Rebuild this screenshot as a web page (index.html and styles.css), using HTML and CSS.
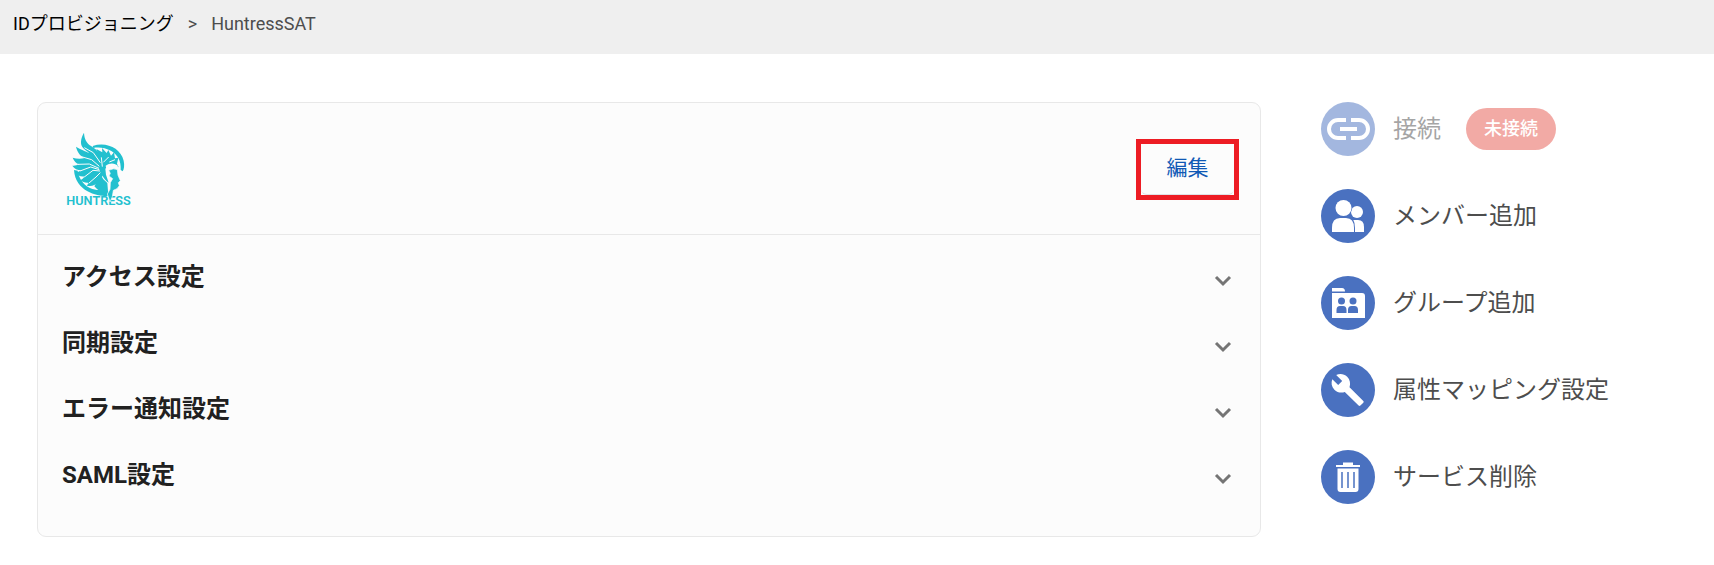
FILE: index.html
```html
<!DOCTYPE html>
<html lang="ja">
  <head>
    <meta charset="UTF-8" />
    <title>HuntressSAT</title>
    <meta name="viewport" content="width=device-width, initial-scale=1.0" />
    <link rel="stylesheet" href="styles.css">
  </head>
  <body>
    <nav class="breadcrumb">
      <a href="#">IDプロビジョニング</a>
      <span>&gt;</span>
      <span>HuntressSAT</span>
    </nav>

    <main class="content">
      <section class="card">
        <div class="card-header">
          <svg class="logo" viewBox="48 36 201 225" role="img" aria-label="HUNTRESS">
            <text class="logo-text" x="49" y="256">HUNTRESS</text>
            <g fill="#22c0cf">
              <!-- ring behind the helmet -->
              <path d="M128 78C168 64 212 84 221 122C224 136 222 147 218 154L212 150C214 122 202 104 184 93C166 83 146 81 130 84Z" />
              <path d="M72 150L83 152C87 178 103 198 127 207C146 213 164 207 170 220L174 228C150 230 76 218 72 150Z" />
              <!-- wing -->
              <path d="M102 38C91 57 91 72 97 81C104 90 112 94 118 99C106 94 96 90 78 80C82 96 89 107 104 114C94 117 80 117 68 113C72 123 78 130 88 133C80 136 74 138 67 137C73 146 82 151 94 151C86 155 81 158 75 159C82 167 93 171 105 169C100 174 96 179 91 181C98 187 107 189 115 188C113 192 113 195 110 197C125 201 136 195 143 187C151 177 157 169 164 160L158 139L150 104C144 91 132 85 123 78C110 69 103 58 102 38Z" />
              <!-- helmet -->
              <path d="M139 87L157 97L156 84L170 99L175 90L183 107L192 97L195 115L205 113L201 131L206 142C190 132 174 136 166 146L168 164L176 188C168 184 160 174 156 163L148 146L152 120Z" />
              <path d="M152 164L160 178L172 189L175 226C158 219 142 211 133 199Z" />
              <!-- face -->
              <path d="M176 151Q191 143 202 149L204 166L211 182L205 188L208 197L201 206L190 211L187 230L180 246L172 222L180 208L181 188L188 176L177 168L181 160Z" stroke="#fcfcfc" stroke-width="2" />
            </g>
            <path d="M103 83L130 98L151 128M94 110L125 119L148 139M84 133L118 132L147 145M90 153L122 141L148 149M103 171L129 151L150 153M116 190L138 171L151 158M154 112L157 140M176 111L160 127M195 119L178 126" stroke="#fcfcfc" stroke-width="3" fill="none" />
            <path d="M167 137C181 128 194 129 205 139L196 144C185 138 176 140 169 147Z" fill="#fcfcfc" />
          </svg>
          <div class="edit-highlight">
            <button type="button" class="edit-btn">編集</button>
          </div>
        </div>
        <div class="settings">
          <button type="button" class="setting" aria-expanded="false">
            アクセス設定
            <svg class="chevron" viewBox="0 0 18 12"><path d="M2 2L9 9L16 2" /></svg>
          </button>
          <button type="button" class="setting" aria-expanded="false">
            同期設定
            <svg class="chevron" viewBox="0 0 18 12"><path d="M2 2L9 9L16 2" /></svg>
          </button>
          <button type="button" class="setting" aria-expanded="false">
            エラー通知設定
            <svg class="chevron" viewBox="0 0 18 12"><path d="M2 2L9 9L16 2" /></svg>
          </button>
          <button type="button" class="setting" aria-expanded="false">
            SAML設定
            <svg class="chevron" viewBox="0 0 18 12"><path d="M2 2L9 9L16 2" /></svg>
          </button>
        </div>
      </section>

      <aside class="actions">
        <button type="button" class="action" disabled>
          <svg class="action-icon" viewBox="0 0 54 54">
            <circle cx="27" cy="27" r="27" />
            <path d="M25 18H17a9 9 0 0 0 0 18H25M30 18H38a9 9 0 0 1 0 18H30" fill="none" stroke="#fff" stroke-width="4" />
            <path d="M19 27H36" stroke="#fff" stroke-width="4" />
          </svg>
          <span>接続</span>
          <span class="status">未接続</span>
        </button>
        <button type="button" class="action">
          <svg class="action-icon" viewBox="0 0 54 54">
            <circle cx="27" cy="27" r="27" />
            <g fill="#fff">
              <circle cx="36" cy="23" r="6" />
              <path d="M31 31H37Q43 31 43 38V43H31Z" />
              <path class="cutout" d="M11 43V39Q11 28 19 28H26Q34 28 34 39V43Z" />
              <circle class="cutout" cx="22.500" cy="19" r="8.500" />
              <path d="M11 43V39Q11 29 19 29H25Q33 29 33 39V43Z" />
              <circle cx="22.500" cy="19" r="8" />
            </g>
          </svg>
          <span>メンバー追加</span>
        </button>
        <button type="button" class="action">
          <svg class="action-icon" viewBox="0 0 54 54">
            <circle cx="27" cy="27" r="27" />
            <path d="M11 12H21Q24 12 24 15.500H11ZM11 17H41Q44 17 44 20V42H11Z" fill="#fff" />
            <g class="cutout">
              <circle cx="20.500" cy="25" r="3.500" />
              <circle cx="32" cy="25" r="3.500" />
              <path d="M15.500 37V34Q15.500 30 19 30H22Q25.500 30 25.500 34V37ZM27 37V34Q27 30 30.500 30H33.500Q37 30 37 34V37Z" />
            </g>
          </svg>
          <span>グループ追加</span>
        </button>
        <button type="button" class="action">
          <svg class="action-icon" viewBox="0 0 54 54">
            <circle cx="27" cy="27" r="27" />
            <path d="M42.300 38L28.500 24.200C29.800 20.700 29 16.600 26.200 13.700C23.100 10.600 18.600 10.200 15.200 12L21.200 18L17.200 22L11.300 16.200C9.900 19.600 10.500 23.800 13.400 26.700C16.200 29.500 20.300 30.300 23.800 28.900L37.600 42.600Q38.500 43.400 39.400 42.600L42.300 39.700Q43.200 38.800 42.300 38Z" fill="#fff" />
          </svg>
          <span>属性マッピング設定</span>
        </button>
        <button type="button" class="action">
          <svg class="action-icon" viewBox="0 0 54 54">
            <circle cx="27" cy="27" r="27" />
            <path d="M15 15H22V12.500H32V15H39V17H15ZM16.500 18.500H37.500V39Q37.500 42 34.500 42H19.500Q16.500 42 16.500 39Z" fill="#fff" />
            <path d="M21 22V38M27 22V38M33 22V38" stroke="#4a71c0" stroke-width="1.500" />
          </svg>
          <span>サービス削除</span>
        </button>
      </aside>
    </main>
  </body>
</html>
```

FILE: styles.css
```css
* {
  box-sizing: border-box;
}

body {
  margin: 0;
  background: #fff;
  color: #4d4d4d;
  font-family: Roboto, "Noto Sans CJK JP", sans-serif;
}

button {
  padding: 0;
  border: none;
  background: none;
  font-family: inherit;
  cursor: pointer;
}

.breadcrumb {
  display: flex;
  gap: 14px;
  padding: 10px 13px 16px;
  background: #efefef;
  font-size: 18px;
  line-height: 28px;
}

.breadcrumb a {
  color: #000;
  text-decoration: none;
}

.content {
  display: flex;
  align-items: flex-start;
  gap: 60px;
  padding: 48px 37px 28px;
}

.card {
  flex: 1;
  border: 1px solid #e8e8e8;
  border-radius: 9px;
  background: #fcfcfc;
}

.card-header {
  display: flex;
  justify-content: space-between;
  align-items: flex-start;
  height: 132px;
  padding: 29px 28px;
  border-bottom: 1px solid #e8e8e8;
}

.logo {
  width: 67px;
  height: 75px;
  overflow: visible;
}

.logo-text {
  fill: #22c0cf;
  font-size: 38px;
  font-weight: 600;
}

.edit-highlight {
  margin: 7px -7px 0 0;
  border: 5px solid #ed1c24;
}

.edit-btn {
  display: block;
  width: 93px;
  height: 51px;
  padding-bottom: 2px;
  border-bottom: 1px solid #dfe1e5;
  border-radius: 6px;
  color: #1059b5;
  font-size: 21px;
  line-height: 48px;
}

.settings {
  padding: 8px 24px 29px;
}

.setting {
  display: flex;
  justify-content: space-between;
  align-items: center;
  width: 100%;
  height: 66px;
  padding-bottom: 4px;
  color: #212121;
  font-size: 24px;
  font-weight: 700;
}

.chevron {
  width: 18px;
  height: 12px;
  margin: 14px 4px 0 0;
  fill: none;
  stroke: #757575;
  stroke-width: 3;
}

.actions {
  display: flex;
  flex-direction: column;
  gap: 33px;
  width: 356px;
}

.action {
  display: flex;
  align-items: center;
  color: #4d4d4d;
  font-size: 24px;
  line-height: 54px;
}

.action:disabled {
  opacity: 0.5;
  cursor: default;
}

.action-icon {
  width: 54px;
  height: 54px;
  margin-right: 18px;
  fill: #4a71c0;
}

.cutout {
  fill: #4a71c0;
}

.status {
  margin-left: 25px;
  padding: 0 18px;
  border-radius: 21px;
  background: #e7574d;
  color: #fff;
  font-size: 18px;
  font-weight: 500;
  line-height: 42px;
}
```
